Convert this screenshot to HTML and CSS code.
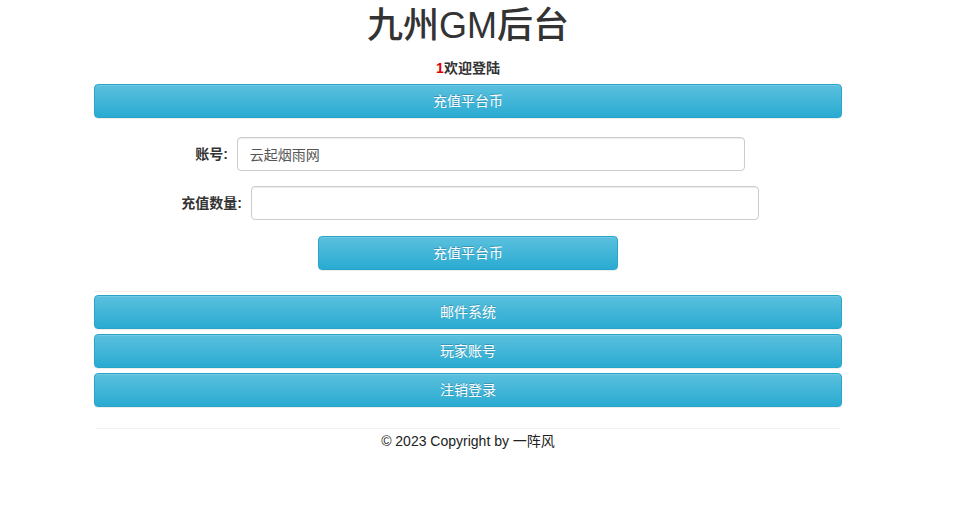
FILE: index.html
```html
<!DOCTYPE html>
<html lang="zh-CN">
<head>
<meta charset="utf-8">
<title>九州GM后台</title>
<link rel="stylesheet" href="styles.css">
</head>
<body>
<div class="page">
  <h1 class="title">九州GM后台</h1>
  <p class="welcome"><span class="num">1</span>欢迎登陆</p>
  <button class="btn btn-block">充值平台币</button>
  <form class="recharge">
    <div class="field">
      <label class="label">账号:</label>
      <input class="input" type="text" value="云起烟雨网">
    </div>
    <div class="field">
      <label class="label">充值数量:</label>
      <input class="input" type="text" value="">
    </div>
    <div class="field">
      <button type="button" class="btn btn-submit">充值平台币</button>
    </div>
  </form>
  <hr class="rule rule-top">
  <div class="menu">
    <button class="btn btn-block">邮件系统</button>
    <button class="btn btn-block">玩家账号</button>
    <button class="btn btn-block">注销登录</button>
  </div>
  <hr class="rule rule-foot">
  <footer class="footer">© 2023 Copyright by 一阵风</footer>
</div>
</body>
</html>
```

FILE: styles.css
```css
* { box-sizing: border-box; }
html, body { margin: 0; padding: 0; background: #fff; }
body {
  font-family: "Liberation Sans", Arial, "Noto Sans CJK SC", sans-serif;
  font-size: 14px;
  line-height: 20px;
  color: #333;
}
.page {
  width: 748px;
  margin: 0 0 0 94px;
}
.title {
  margin: 6px 0 0;
  font-size: 36px;
  line-height: 40px;
  font-weight: 500;
  text-align: center;
  color: #333;
}
.welcome {
  margin: 12px 0 0;
  font-weight: bold;
  text-align: center;
  color: #333;
}
.num { color: #e00000; }
.btn {
  display: inline-block;
  height: 34px;
  padding: 6px 12px;
  font-family: inherit;
  font-size: 14px;
  line-height: 20px;
  color: #fff;
  text-align: center;
  background-image: linear-gradient(to bottom, #5bc0de 0, #2aabd2 100%);
  border: 1px solid #28a4c9;
  border-radius: 4px;
  text-shadow: 0 -1px 0 rgba(0,0,0,.2);
  box-shadow: inset 0 1px 0 rgba(255,255,255,.15), 0 1px 1px rgba(0,0,0,.075);
  cursor: pointer;
}
.btn-block {
  display: block;
  width: 100%;
}
.page > .btn-block { margin-top: 6px; }
.recharge {
  margin-top: 19px;
}
.field {
  display: flex;
  justify-content: center;
  align-items: center;
  gap: 9px;
  margin-bottom: 15px;
}
.label {
  padding-left: 4px;
  font-weight: bold;
  color: #333;
}
.input {
  width: 508px;
  height: 34px;
  padding: 6px 12px;
  font-family: inherit;
  font-size: 14px;
  line-height: 20px;
  color: #555;
  background: #fff;
  border: 1px solid #ccc;
  border-radius: 4px;
  box-shadow: inset 0 1px 1px rgba(0,0,0,.075);
}
.btn-submit {
  width: 300px;
  margin-top: 1px;
}
.recharge .field:last-child { margin-bottom: 0; }
.rule {
  border: 0;
  border-top: 1px solid #f0f0f0;
  margin: 0;
}
.rule-top { margin-top: 21px; }
.menu {
  margin-top: 3px;
  display: flex;
  flex-direction: column;
  gap: 5px;
}
.rule-foot {
  margin: 21px 2px 0;
  border-top-color: #f2f2f2;
}
.footer {
  margin-top: 2px;
  text-align: center;
  color: #222;
}
```
